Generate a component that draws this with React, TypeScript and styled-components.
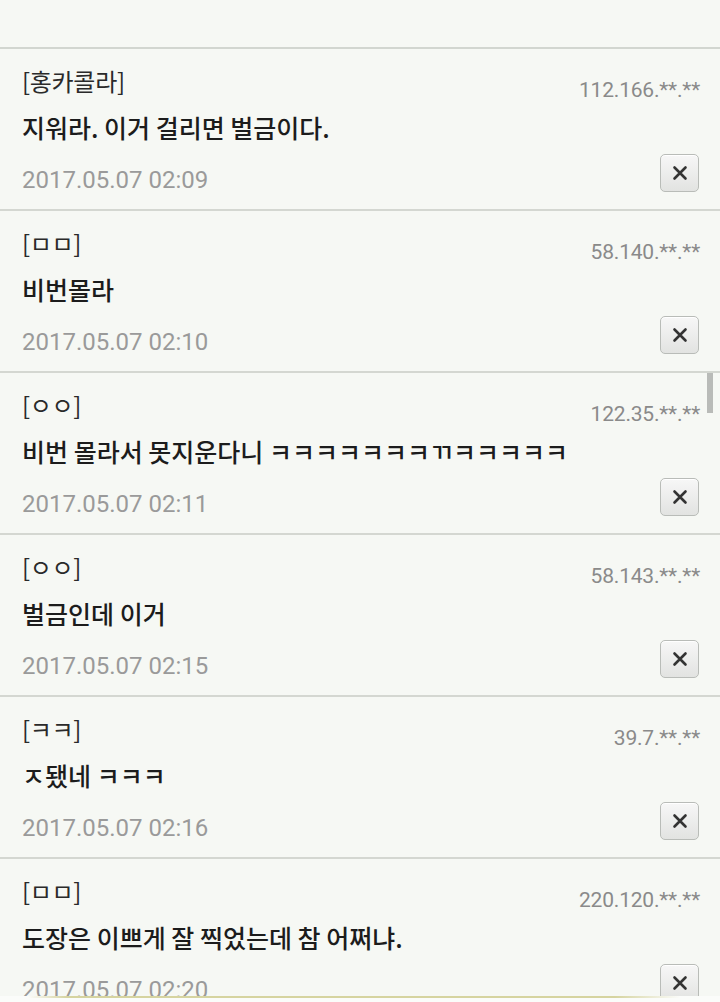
import React from "react";
import styled, { createGlobalStyle } from "styled-components";

const GlobalStyle = createGlobalStyle`
  html, body {
    margin: 0;
    padding: 0;
    background: #f6f8f4;
  }
  body {
    font-family: "Noto Sans CJK KR", "Noto Sans", sans-serif;
    overflow: hidden;
  }
`;

type Comment = {
  name: string;
  ip: string;
  text: string;
  date: string;
};

const comments: Comment[] = [
  { name: "[홍카콜라]", ip: "112.166.**.**", text: "지워라. 이거 걸리면 벌금이다.", date: "2017.05.07 02:09" },
  { name: "[ㅁㅁ]", ip: "58.140.**.**", text: "비번몰라", date: "2017.05.07 02:10" },
  { name: "[ㅇㅇ]", ip: "122.35.**.**", text: "비번 몰라서 못지운다니 ㅋㅋㅋㅋㅋㅋㅋㄲㅋㅋㅋㅋㅋ", date: "2017.05.07 02:11" },
  { name: "[ㅇㅇ]", ip: "58.143.**.**", text: "벌금인데 이거", date: "2017.05.07 02:15" },
  { name: "[ㅋㅋ]", ip: "39.7.**.**", text: "ㅈ됐네 ㅋㅋㅋ", date: "2017.05.07 02:16" },
  { name: "[ㅁㅁ]", ip: "220.120.**.**", text: "도장은 이쁘게 잘 찍었는데 참 어쩌냐.", date: "2017.05.07 02:20" },
];

export default function App() {
  return (
    <>
      <GlobalStyle />
      <Page>
        <List>
          {comments.map((c, i) => (
            <Row key={i}>
              <Body>
                <Name>{c.name}</Name>
                <Text>{c.text}</Text>
                <DateLine>{c.date}</DateLine>
              </Body>
              <Side>
                <Ip>{c.ip}</Ip>
                <DeleteButton aria-label="삭제">
                  <svg width="18" height="18" viewBox="0 0 18 18">
                    <path d="M3.5 3.5 L14.5 14.5 M14.5 3.5 L3.5 14.5" stroke="#333" strokeWidth="2.6" strokeLinecap="round" />
                  </svg>
                </DeleteButton>
              </Side>
            </Row>
          ))}
        </List>
        <ScrollThumb />
        <BottomBar />
      </Page>
    </>
  );
}

const Page = styled.div`
  position: relative;
  width: 720px;
  height: 1002px;
  overflow: hidden;
  padding-top: 47px;
  box-sizing: border-box;
`;

const List = styled.div`
  border-top: 2px solid #d2d6d0;
`;

const Row = styled.div`
  display: flex;
  justify-content: space-between;
  height: 160px;
  padding: 0 20px 0 22px;
  border-bottom: 2px solid #d4d7d1;
`;

const Body = styled.div`
  display: flex;
  flex-direction: column;
  padding-top: 15px;
`;

const Name = styled.div`
  font-size: 24px;
  line-height: 34px;
  color: #2a2a2a;
  letter-spacing: -0.3px;
`;

const Text = styled.div`
  margin-top: 12px;
  font-size: 25px;
  line-height: 34px;
  font-weight: 500;
  color: #1c1c1c;
  letter-spacing: 0;
`;

const DateLine = styled.div`
  margin-top: 19px;
  font-family: "Roboto", "Noto Sans", sans-serif;
  font-size: 24px;
  line-height: 34px;
  color: #9a9a9a;
`;

const Side = styled.div`
  display: flex;
  flex-direction: column;
  align-items: flex-end;
  padding-top: 28px;
`;

const Ip = styled.div`
  font-family: "Roboto", "Noto Sans", sans-serif;
  font-size: 21px;
  line-height: 26px;
  color: #8a8a8a;
  letter-spacing: -0.2px;
`;

const DeleteButton = styled.button`
  display: flex;
  align-items: center;
  justify-content: center;
  margin-top: 51px;
  margin-right: 1px;
  width: 39px;
  height: 38px;
  padding: 0;
  border: 1px solid #b9bcb8;
  border-radius: 5px;
  background: linear-gradient(#f7f7f7, #e2e3e1);
  box-shadow: inset 0 1px 0 #ffffff;
`;

const ScrollThumb = styled.div`
  position: absolute;
  right: 7px;
  top: 373px;
  width: 6px;
  height: 40px;
  background: #b9bbb8;
`;

const BottomBar = styled.div`
  position: absolute;
  left: 0;
  right: 0;
  bottom: 0;
  height: 6px;
  background: #fbfcfa;
  &::before {
    content: "";
    position: absolute;
    left: 28px;
    right: 40px;
    top: 0;
    height: 2px;
    background: linear-gradient(90deg, rgba(214, 212, 160, 0), #d6d4a0 6%, #d6d4a0 90%, rgba(214, 212, 160, 0));
  }
`;
